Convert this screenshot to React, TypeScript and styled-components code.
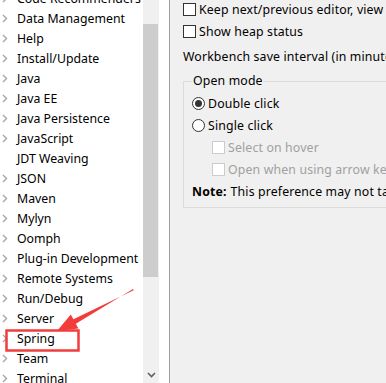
import React from "react";
import styled, { createGlobalStyle } from "styled-components";

const Global = createGlobalStyle`
  html, body { margin: 0; padding: 0; }
  body { font-family: "Noto Sans", "Noto Sans CJK SC", sans-serif; font-size: 12.3px; color: #000; }
`;

const Window = styled.div`
  position: relative;
  width: 386px;
  height: 383px;
  display: flex;
  overflow: hidden;
  background: #f0f0f0;
`;

const TreePane = styled.div`
  width: 169px;
  height: 100%;
  display: flex;
  background: #fff;
  border-right: 1px solid #a0a0a0;
  flex-shrink: 0;
`;

const TreeViewport = styled.div`
  width: 143px;
  height: 100%;
  overflow: hidden;
`;

const TreeList = styled.ul`
  list-style: none;
  margin: -12px 0 0 0;
  padding: 0;
`;

const TreeRow = styled.li`
  height: 20px;
  display: flex;
  align-items: center;
  white-space: nowrap;
`;

const Twisty = styled.span`
  width: 17px;
  flex-shrink: 0;
  display: flex;
  align-items: center;
  padding-left: 2px;
  box-sizing: border-box;
`;

const Scrollbar = styled.div`
  width: 16px;
  height: 100%;
  background: #f0f0f0;
  display: flex;
  flex-direction: column;
`;

const ScrollSpacer = styled.div<{ $h: number }>`
  height: ${(p) => p.$h}px;
  flex-shrink: 0;
`;

const Thumb = styled.div`
  height: 253px;
  margin: 0 1px 0 0;
  background: #cdcdcd;
`;

const ScrollArrow = styled.div`
  margin-top: auto;
  height: 17px;
  display: flex;
  align-items: center;
  justify-content: center;
`;

const Gutter = styled.div`
  width: 10px;
  background: #fff;
`;

const Content = styled.div`
  flex: 1;
  padding: 0 0 0 13px;
  margin-top: -2px;
  display: flex;
  flex-direction: column;
  white-space: nowrap;
  letter-spacing: 0.15px;
`;

const CheckRow = styled.label<{ $disabled?: boolean }>`
  display: flex;
  align-items: center;
  height: 22px;
  gap: 3px;
  color: ${(p) => (p.$disabled ? "#a0a0a0" : "#000")};
`;

const Box = styled.span<{ $disabled?: boolean }>`
  width: 11px;
  height: 11px;
  border: 1px solid ${(p) => (p.$disabled ? "#cccccc" : "#333")};
  background: #fff;
  flex-shrink: 0;
`;

const Radio = styled.span<{ $checked?: boolean }>`
  width: 11px;
  height: 11px;
  border: 1px solid #333;
  border-radius: 50%;
  background: #fff;
  flex-shrink: 0;
  display: flex;
  align-items: center;
  justify-content: center;
  &::after {
    content: "";
    width: 7px;
    height: 7px;
    border-radius: 50%;
    background: ${(p) => (p.$checked ? "#333" : "transparent")};
  }
`;

const Label = styled.div`
  height: 22px;
  display: flex;
  align-items: center;
  margin-top: 3px;
`;

const Group = styled.fieldset`
  margin: 7px -40px 0 0;
  padding: 4px 0 5px 8px;
  border: 1px solid #dcdcdc;
  border-radius: 0;
`;

const Legend = styled.legend`
  padding: 0 1px;
  margin-left: 0;
  font-size: 12.3px;
  line-height: 14px;
`;

const Indented = styled.div`
  padding-left: 20px;
  display: flex;
  flex-direction: column;
`;

const Note = styled.div`
  height: 22px;
  display: flex;
  align-items: center;
  b { font-weight: 700; margin-right: 4px; }
`;

const Annotation = styled.svg`
  position: absolute;
  left: 0;
  top: 0;
  pointer-events: none;
`;

const items: [string, boolean][] = [
  ["Code Recommenders", true],
  ["Data Management", true],
  ["Help", true],
  ["Install/Update", true],
  ["Java", true],
  ["Java EE", true],
  ["Java Persistence", true],
  ["JavaScript", true],
  ["JDT Weaving", false],
  ["JSON", true],
  ["Maven", true],
  ["Mylyn", true],
  ["Oomph", true],
  ["Plug-in Development", true],
  ["Remote Systems", true],
  ["Run/Debug", true],
  ["Server", true],
  ["Spring", true],
  ["Team", true],
  ["Terminal", true],
];

const Chevron = () => (
  <svg width="6" height="9" viewBox="0 0 6 9">
    <path d="M1 1 L4.5 4.5 L1 8" fill="none" stroke="#a6a6a6" strokeWidth="1.4" />
  </svg>
);

export default function App() {
  return (
    <>
      <Global />
      <Window>
        <TreePane>
          <TreeViewport>
            <TreeList>
              {items.map(([name, hasKids]) => (
                <TreeRow key={name}>
                  <Twisty>{hasKids && <Chevron />}</Twisty>
                  {name}
                </TreeRow>
              ))}
            </TreeList>
          </TreeViewport>
          <Scrollbar>
            <ScrollSpacer $h={24} />
            <Thumb />
            <ScrollArrow>
              <svg width="9" height="6" viewBox="0 0 9 6">
                <path d="M1 1 L4.5 4.5 L8 1" fill="none" stroke="#606060" strokeWidth="1.6" />
              </svg>
            </ScrollArrow>
          </Scrollbar>
          <Gutter />
        </TreePane>
        <Content>
          <CheckRow>
            <Box />
            Keep next/previous editor, view and perspectives dialog open
          </CheckRow>
          <CheckRow>
            <Box />
            Show heap status
          </CheckRow>
          <Label>Workbench save interval (in minutes):</Label>
          <Group>
            <Legend>Open mode</Legend>
            <CheckRow>
              <Radio $checked />
              Double click
            </CheckRow>
            <CheckRow>
              <Radio />
              Single click
            </CheckRow>
            <Indented>
              <CheckRow $disabled>
                <Box $disabled />
                Select on hover
              </CheckRow>
              <CheckRow $disabled>
                <Box $disabled />
                Open when using arrow keys
              </CheckRow>
            </Indented>
            <Note>
              <b>Note:</b> This preference may not take effect on all views
            </Note>
          </Group>
        </Content>
        <Annotation width="386" height="383" viewBox="0 0 386 383">
          <rect x="6.5" y="330.5" width="72" height="20" fill="none" stroke="#f23c3c" strokeWidth="2.5" />
          <path d="M133 289 L75.8 323.7 L78.4 328.5 L57 331 L70.8 314.5 L73.4 319.3 L133.6 290.3 Z" fill="#f23c3c" />
        </Annotation>
      </Window>
    </>
  );
}
